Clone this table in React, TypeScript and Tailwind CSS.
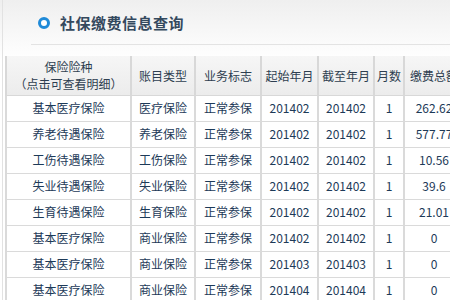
const rows = [
  ['基本医疗保险', '医疗保险', '正常参保', '201402', '201402', '1', '262.62'],
  ['养老待遇保险', '养老保险', '正常参保', '201402', '201402', '1', '577.77'],
  ['工伤待遇保险', '工伤保险', '正常参保', '201402', '201402', '1', '10.56'],
  ['失业待遇保险', '失业保险', '正常参保', '201402', '201402', '1', '39.6'],
  ['生育待遇保险', '生育保险', '正常参保', '201402', '201402', '1', '21.01'],
  ['基本医疗保险', '商业保险', '正常参保', '201402', '201402', '1', '0'],
  ['基本医疗保险', '商业保险', '正常参保', '201403', '201403', '1', '0'],
  ['基本医疗保险', '商业保险', '正常参保', '201404', '201404', '1', '0'],
]

const widths = ['w-[125px]', 'w-[64px]', 'w-[66px]', 'w-[57px]', 'w-[56px]', 'w-[30px]', 'w-[60px]']

export default function App() {
  return (
    <div
      className="h-[300px] w-[450px] overflow-hidden bg-gradient-to-b from-[#efefef] via-white via-[20%] to-white pl-[2px] text-[12px]"
      style={{ fontFamily: '"Noto Sans CJK SC", "Noto Sans", sans-serif' }}
    >
      <div className="h-full border-l border-[#e2e2e2]">
        {/* title */}
        <div className="flex h-[44px] items-center pl-[35px] pt-[2px]">
          <span className="mr-[10px] h-[12px] w-[12px] rounded-full border-[3px] border-[#1f8ad8] bg-white" />
          <h1 className="text-[15px] font-bold tracking-[0.5px] text-[#34495e]">社保缴费信息查询</h1>
        </div>
        <div className="ml-[28px] border-t border-[#e3e3e3]" />

        <div className="mt-[11px] w-[600px] pl-[2px]">
          <table className="table-fixed border-collapse text-center text-[#1d3a58]">
            <colgroup>
              {widths.map((w, i) => (
                <col key={i} className={w} />
              ))}
            </colgroup>
            <thead>
              <tr className="h-[39px] bg-gradient-to-b from-[#f6f6f6] to-[#ececec] leading-[17px] text-[#2e3e50]">
                <th className="border-x-2 border-b border-[#d8d8d8] font-normal">
                  保险险种
                  <br />
                  （点击可查看明细）
                </th>
                <th className="border-x-2 border-b border-[#d8d8d8] font-normal">账目类型</th>
                <th className="border-x-2 border-b border-[#d8d8d8] font-normal">业务标志</th>
                <th className="border-x-2 border-b border-[#d8d8d8] font-normal">起始年月</th>
                <th className="border-x-2 border-b border-[#d8d8d8] font-normal">截至年月</th>
                <th className="border-x-2 border-b border-[#d8d8d8] font-normal">月数</th>
                <th className="border-x-2 border-b border-[#d8d8d8] whitespace-nowrap font-normal">缴费总额</th>
              </tr>
            </thead>
            <tbody className="bg-white">
              {rows.map((r, i) => (
                <tr key={i} className="h-[26px]">
                  {r.map((c, j) => (
                    <td key={j} className="border-x-2 border-b border-[#dadada] p-0 whitespace-nowrap">
                      {c}
                    </td>
                  ))}
                </tr>
              ))}
            </tbody>
          </table>
        </div>
      </div>
    </div>
  )
}
